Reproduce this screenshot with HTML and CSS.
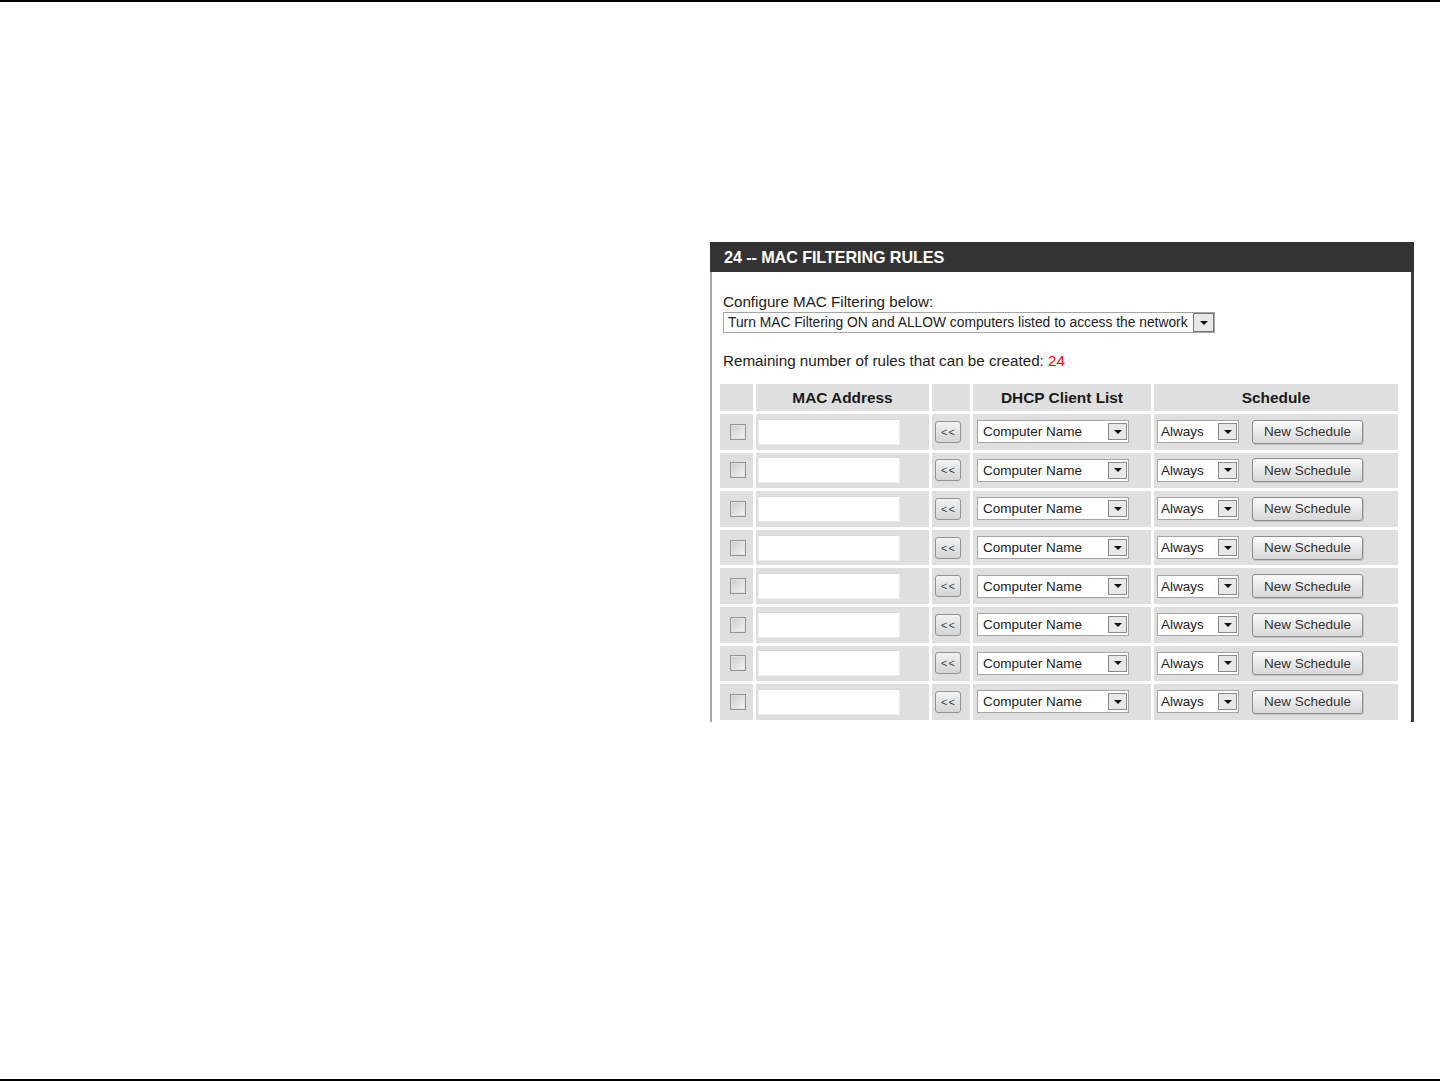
FILE: index.html
```html
<!DOCTYPE html>
<html lang="en">
<head>
    <meta charset="UTF-8">
    <meta name="viewport" content="width=device-width, initial-scale=1.0">
    <title>MAC Filtering Rules</title>
    <link rel="stylesheet" href="styles.css">
</head>
<body>
    <div class="page">
        <div class="rule"></div>

        <main class="content">
            <section class="panel">
                <h2 class="panel-title">24 -- MAC FILTERING RULES</h2>

                <div class="panel-body">
                    <p class="label">Configure MAC Filtering below:</p>
                    <div class="select select-mode">
                        <span class="select-text">Turn MAC Filtering ON and ALLOW computers listed to access the network</span>
                        <span class="select-arrow"></span>
                    </div>

                    <p class="remaining">Remaining number of rules that can be created: <span class="count">24</span></p>

                    <table class="rules">
                        <colgroup>
                            <col class="col-check">
                            <col class="col-mac">
                            <col class="col-copy">
                            <col class="col-dhcp">
                            <col class="col-schedule">
                        </colgroup>
                        <thead>
                            <tr>
                                <th></th>
                                <th>MAC Address</th>
                                <th></th>
                                <th>DHCP Client List</th>
                                <th>Schedule</th>
                            </tr>
                        </thead>
                        <tbody id="ruleRows"></tbody>
                    </table>
                </div>
            </section>
        </main>

        <div class="rule"></div>
    </div>

    <script>
        // eight identical rule rows
        const rows = document.getElementById('ruleRows');
        const rowHtml = `
            <td class="cell-check"><input type="checkbox" class="check"></td>
            <td class="cell-mac"><input type="text" class="mac-input"></td>
            <td class="cell-copy"><button class="copy-button">&lt;&lt;</button></td>
            <td class="cell-dhcp">
                <div class="select select-client">
                    <span class="select-text">Computer Name</span>
                    <span class="select-arrow"></span>
                </div>
            </td>
            <td class="cell-schedule">
                <div class="schedule-group">
                    <div class="select select-always">
                        <span class="select-text">Always</span>
                        <span class="select-arrow"></span>
                    </div>
                    <button class="schedule-button">New Schedule</button>
                </div>
            </td>`;

        for (let i = 0; i < 8; i++) {
            const tr = document.createElement('tr');
            tr.innerHTML = rowHtml;
            rows.appendChild(tr);
        }
    </script>
</body>
</html>
```

FILE: styles.css
```css
body {
    margin: 0;
    background-color: #fff;
    color: #222;
    font-family: "Liberation Sans", Arial, sans-serif;
}
.page {
    height: 1081px;
    display: flex;
    flex-direction: column;
}
.rule {
    height: 2px;
    background-color: #000;
}
.content {
    flex: 1;
    overflow: hidden;
}
.panel {
    width: 704px;
    height: 480px;
    margin: 240px 0 0 710px;
    overflow: hidden;
    display: flex;
    flex-direction: column;
}
.panel-title {
    margin: 0;
    height: 30px;
    line-height: 31px;
    padding-left: 14px;
    background-color: #333;
    color: #fff;
    font-size: 16.2px;
    font-weight: bold;
    letter-spacing: -0.1px;
}
.panel-body {
    flex: 1;
    border-left: 2px solid #a8a8a8;
    border-right: 3px solid #3a3a3a;
    padding-left: 8px;
}
.label {
    margin: 21px 0 1px 3px;
    font-size: 15.2px;
    line-height: 18px;
}
.select {
    display: flex;
    align-items: center;
    box-sizing: border-box;
    background-color: #fff;
    border: 1px solid #a5a5a5;
    color: #222;
}
.select-text {
    flex: 1;
    white-space: nowrap;
    overflow: hidden;
}
.select-arrow {
    box-sizing: border-box;
    width: 19px;
    height: 17px;
    margin-right: 1px;
    border: 1px solid #8a8a8a;
    background-color: #e8e8e8;
    display: flex;
    align-items: center;
    justify-content: center;
}
.select-arrow::after {
    content: "";
    border-left: 4px solid transparent;
    border-right: 4px solid transparent;
    border-top: 4px solid #111;
}
.select-mode {
    width: 492px;
    height: 21px;
    margin-left: 3px;
    font-size: 13.8px;
}
.select-mode .select-text {
    padding-left: 4px;
}
.select-mode .select-arrow {
    width: 21px;
    height: 19px;
    margin-right: 0;
    border-color: #777;
}
.remaining {
    margin: 19px 0 0 3px;
    font-size: 15.2px;
    line-height: 18px;
}
.count {
    color: #ff0000;
}
.rules {
    margin: 11px 0 0 -3px;
    width: 684px;
    table-layout: fixed;
    border-collapse: separate;
    border-spacing: 3px;
}
.col-check { width: 33px; }
.col-mac { width: 173px; }
.col-copy { width: 38px; }
.col-dhcp { width: 178px; }
.col-schedule { width: 244px; }
.rules th,
.rules td {
    background-color: #dfdfdf;
    padding: 0;
    vertical-align: middle;
}
.rules th {
    height: 27px;
    font-size: 15.4px;
    font-weight: bold;
    color: #1a1a1a;
    text-align: center;
}
.rules td {
    height: 35.6px;
}
.cell-check {
    padding-left: 10px !important;
}
.check {
    appearance: none;
    display: block;
    width: 16px;
    height: 16px;
    margin: 0;
    box-sizing: border-box;
    border: 1px solid #939393;
    background: linear-gradient(135deg, #cbcbcb, #f4f4f4);
    box-shadow: inset 0 0 0 1px #e2e2e2;
}
.cell-mac {
    padding-left: 2px !important;
}
.mac-input {
    display: block;
    width: 142px;
    height: 26px;
    margin: 0;
    box-sizing: border-box;
    border: 1px solid #ececec;
    border-top-color: #d8d8d8;
    background-color: #fff;
    font-family: inherit;
}
.cell-copy {
    padding-left: 3px !important;
}
.copy-button {
    display: block;
    width: 26px;
    height: 22px;
    margin: 0;
    padding: 0;
    box-sizing: border-box;
    border: 1px solid #949494;
    border-radius: 3px;
    background: linear-gradient(#f2f2f2, #d4d4d4);
    color: #444;
    font-family: inherit;
    font-size: 11px;
    letter-spacing: 1px;
    text-indent: 1px;
}
.cell-dhcp {
    padding-left: 4px !important;
}
.select-client,
.select-always {
    height: 23px;
    font-size: 13.5px;
}
.select-client {
    width: 152px;
}
.select-client .select-text {
    padding-left: 5px;
}
.select-always {
    width: 82px;
}
.select-always .select-text {
    padding-left: 3px;
}
.cell-schedule {
    padding-left: 3px !important;
}
.schedule-group {
    display: flex;
    align-items: center;
    gap: 13px;
}
.schedule-button {
    width: 111px;
    height: 24px;
    margin: 0;
    padding: 0;
    box-sizing: border-box;
    border: 1px solid #8c8c8c;
    border-radius: 3px;
    background: linear-gradient(#fbfbfb, #d8d8d8);
    box-shadow: 1px 1px 0 #c4c4c4;
    color: #333;
    font-family: inherit;
    font-size: 13.5px;
}
```
